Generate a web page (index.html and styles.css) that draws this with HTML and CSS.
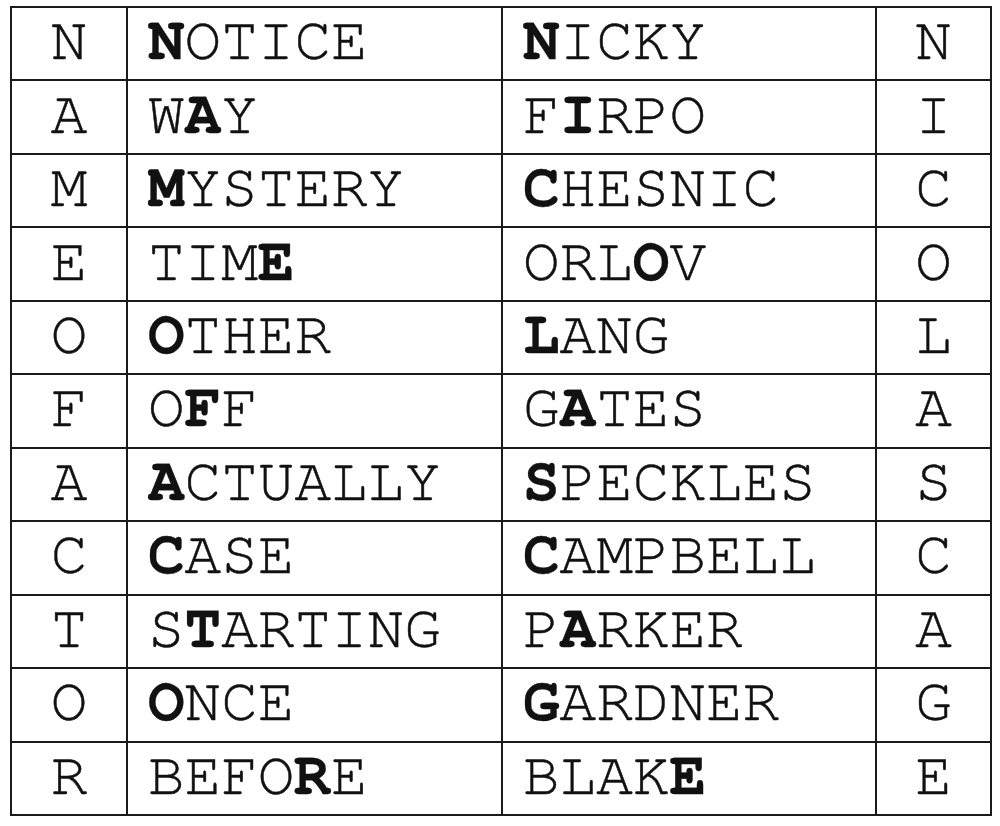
FILE: index.html
```html
<!DOCTYPE html>
<html>
<head>
<meta charset="utf-8">
<link rel="stylesheet" href="styles.css">
</head>
<body>
<table class="grid">
  <colgroup>
    <col class="c-side"><col class="c-word"><col class="c-word2"><col class="c-side2">
  </colgroup>
  <tbody>
    <tr><td class="ltr">N</td><td class="word"><b>N</b>OTICE</td><td class="word"><b>N</b>ICKY</td><td class="ltr">N</td></tr>
    <tr><td class="ltr">A</td><td class="word">W<b>A</b>Y</td><td class="word">F<b>I</b>RPO</td><td class="ltr">I</td></tr>
    <tr><td class="ltr">M</td><td class="word"><b>M</b>YSTERY</td><td class="word"><b>C</b>HESNIC</td><td class="ltr">C</td></tr>
    <tr><td class="ltr">E</td><td class="word">TIM<b>E</b></td><td class="word">ORL<b>O</b>V</td><td class="ltr">O</td></tr>
    <tr><td class="ltr">O</td><td class="word"><b>O</b>THER</td><td class="word"><b>L</b>ANG</td><td class="ltr">L</td></tr>
    <tr><td class="ltr">F</td><td class="word">O<b>F</b>F</td><td class="word">G<b>A</b>TES</td><td class="ltr">A</td></tr>
    <tr><td class="ltr">A</td><td class="word"><b>A</b>CTUALLY</td><td class="word"><b>S</b>PECKLES</td><td class="ltr">S</td></tr>
    <tr><td class="ltr">C</td><td class="word"><b>C</b>ASE</td><td class="word"><b>C</b>AMPBELL</td><td class="ltr">C</td></tr>
    <tr><td class="ltr">T</td><td class="word">S<b>T</b>ARTING</td><td class="word">P<b>A</b>RKER</td><td class="ltr">A</td></tr>
    <tr><td class="ltr">O</td><td class="word"><b>O</b>NCE</td><td class="word"><b>G</b>ARDNER</td><td class="ltr">G</td></tr>
    <tr><td class="ltr">R</td><td class="word">BEFO<b>R</b>E</td><td class="word">BLAK<b>E</b></td><td class="ltr">E</td></tr>
  </tbody>
</table>
</body>
</html>
```
FILE: styles.css
```css
html, body {
  margin: 0;
  padding: 0;
  background: #ffffff;
}
body {
  padding: 6px 0 0 10px;
}
.grid {
  border-collapse: collapse;
  table-layout: fixed;
  width: 980px;
  height: 810px;
  font-family: "Nimbus Mono PS", "Nimbus Mono L", "FreeMono", "Courier", "Courier New", "Liberation Mono", monospace;
  font-size: 61px;
  color: #111;
  -webkit-text-stroke: 0.5px #111;
}
.c-side { width: 116px; }
.c-word { width: 375px; }
.c-word2 { width: 374px; }
.c-side2 { width: 115px; }
.grid td {
  border: 2px solid #1a1a1a;
  padding: 0 0 6px 0;
  line-height: 1;
  vertical-align: middle;
  white-space: nowrap;
}
.grid td.ltr {
  text-align: center;
}
.grid td.word {
  padding-left: 20px;
}
.grid b {
  font-weight: bold;
  -webkit-text-stroke: 0.3px #111;
}
```
